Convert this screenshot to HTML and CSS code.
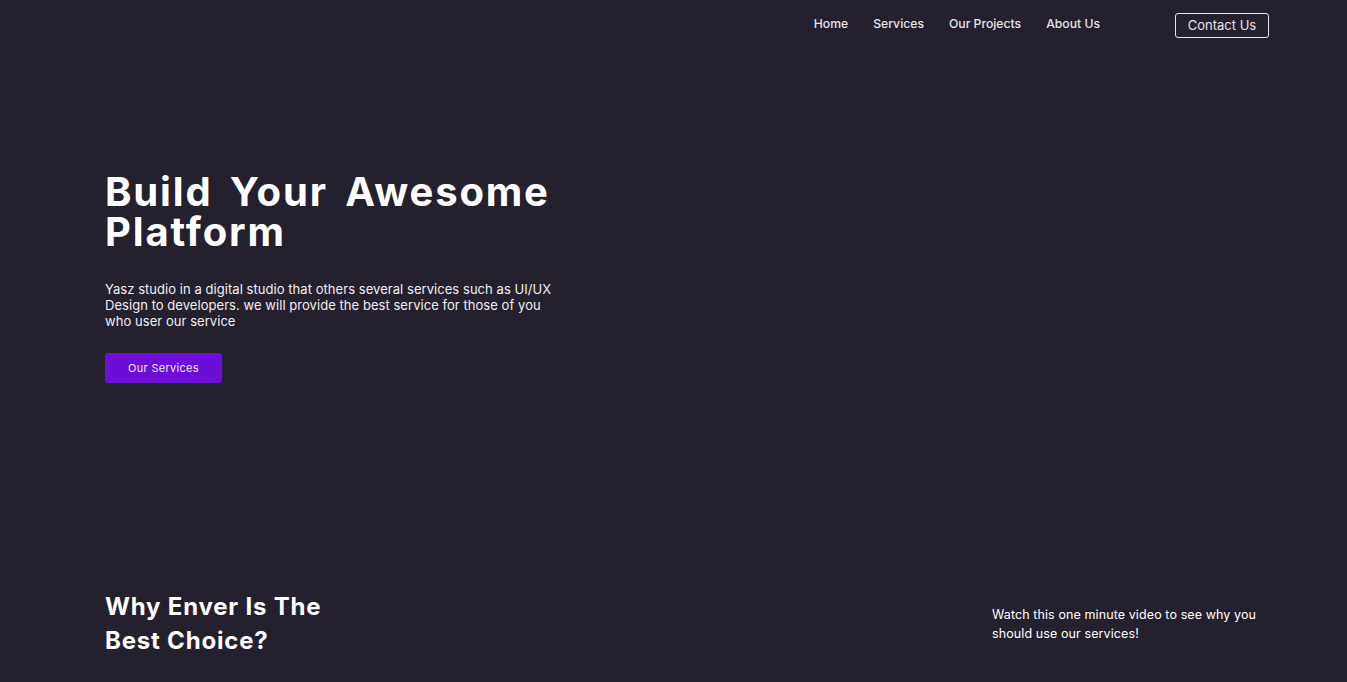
FILE: index.html
```html
<!DOCTYPE html>
<html>
<head>
<meta charset="utf-8">
<link rel="stylesheet" href="styles.css">
</head>
<body>
<header class="header">
  <nav class="nav">
    <a class="nav-link" href="#">Home</a>
    <a class="nav-link" href="#">Services</a>
    <a class="nav-link" href="#">Our Projects</a>
    <a class="nav-link" href="#">About Us</a>
  </nav>
  <a class="contact-btn" href="#">Contact Us</a>
</header>
<section class="hero">
  <h1 class="hero-title">Build Your Awesome Platform</h1>
  <p class="hero-text">Yasz studio in a digital studio that others several services such as UI/UX Design to developers. we will provide the best service for those of you who user our service</p>
  <a class="primary-btn" href="#">Our Services</a>
</section>
<section class="why">
  <h2 class="why-title">Why Enver Is The<br>Best Choice?</h2>
  <p class="why-text">Watch this one minute video to see why you should use our services!</p>
</section>
</body>
</html>
```
FILE: styles.css
```css
* { box-sizing: border-box; }
html, body { margin: 0; padding: 0; }
body {
  background: #25202d;
  color: #ffffff;
  font-family: Inter, "Open Sans", sans-serif;
  height: 682px;
  overflow: hidden;
}
a { text-decoration: none; color: inherit; }
.header {
  display: flex;
  justify-content: flex-end;
  align-items: flex-start;
  padding: 13px 78px 0 0;
}
.nav {
  display: flex;
  gap: 25px;
  margin-right: 75px;
  padding-top: 3px;
}
.nav-link {
  font-size: 12.2px;
  line-height: 16px;
  color: #e6e4ea;
  font-weight: 500;
}
.contact-btn {
  font-size: 13px;
  color: #e6e4ea;
  border: 1px solid #e6e4ea;
  border-radius: 3px;
  width: 94px;
  height: 25px;
  display: flex;
  align-items: center;
  justify-content: center;
  padding-bottom: 2px;
}
.hero {
  padding: 134px 0 0 105px;
  height: 552px;
}
.hero-title {
  margin: 0;
  width: 460px;
  font-size: 40px;
  line-height: 40px;
  font-weight: 700;
  letter-spacing: 1.85px;
  word-spacing: 6px;
}
.hero-text {
  margin: 29px 0 0;
  width: 452px;
  font-size: 13px;
  line-height: 16px;
  letter-spacing: 0.05px;
  color: #f1eff4;
}
.primary-btn {
  margin-top: 24px;
  display: flex;
  align-items: center;
  justify-content: center;
  width: 117px;
  height: 30px;
  background: #6e0cd8;
  border-radius: 3px;
  font-size: 11px;
  letter-spacing: 0.3px;
  color: #f2eaff;
}
.why {
  display: flex;
  justify-content: space-between;
  align-items: flex-start;
  padding: 0 78px 0 105px;
}
.why-title {
  margin: 0;
  font-size: 24px;
  line-height: 34px;
  font-weight: 700;
  letter-spacing: 0.8px;
}
.why-text {
  margin: 15px 0 0;
  width: 277px;
  font-size: 12.5px;
  line-height: 19px;
  letter-spacing: 0.1px;
}
```
